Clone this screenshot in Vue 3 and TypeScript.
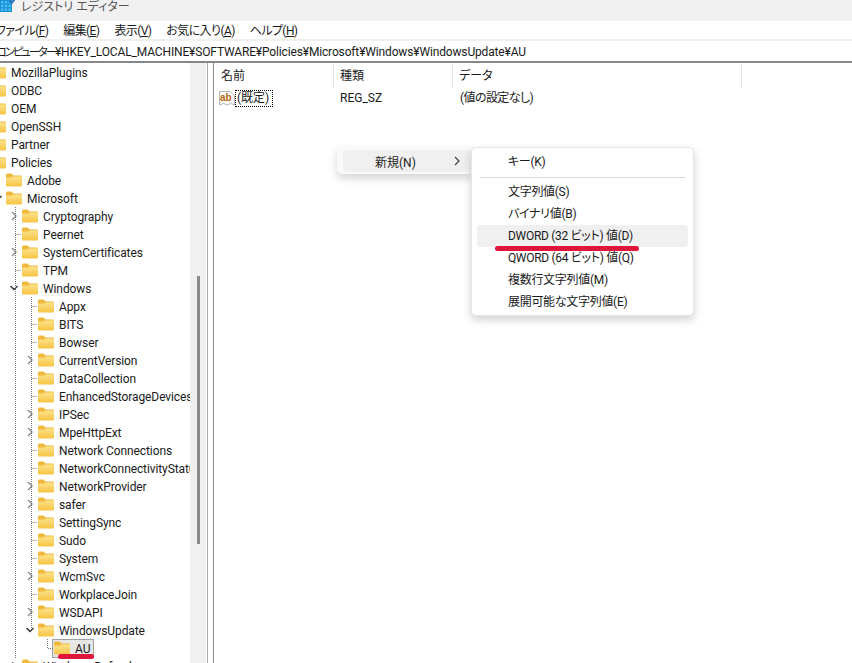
<script setup lang="ts">
// ツリーの行データ
interface TreeRow {
  label: string;
  level: number;
  arrow?: "closed" | "open";
  selected?: boolean;
}

const menus = [
  { name: "ファイル(", key: "F" },
  { name: "編集(", key: "E" },
  { name: "表示(", key: "V" },
  { name: "お気に入り(", key: "A" },
  { name: "ヘルプ(", key: "H" },
];

const rows: TreeRow[] = [
  { label: "MozillaPlugins", level: 0 },
  { label: "ODBC", level: 0 },
  { label: "OEM", level: 0 },
  { label: "OpenSSH", level: 0 },
  { label: "Partner", level: 0 },
  { label: "Policies", level: 0 },
  { label: "Adobe", level: 1 },
  { label: "Microsoft", level: 1, arrow: "open" },
  { label: "Cryptography", level: 2, arrow: "closed" },
  { label: "Peernet", level: 2 },
  { label: "SystemCertificates", level: 2, arrow: "closed" },
  { label: "TPM", level: 2 },
  { label: "Windows", level: 2, arrow: "open" },
  { label: "Appx", level: 3 },
  { label: "BITS", level: 3 },
  { label: "Bowser", level: 3 },
  { label: "CurrentVersion", level: 3, arrow: "closed" },
  { label: "DataCollection", level: 3 },
  { label: "EnhancedStorageDevices", level: 3 },
  { label: "IPSec", level: 3, arrow: "closed" },
  { label: "MpeHttpExt", level: 3, arrow: "closed" },
  { label: "Network Connections", level: 3 },
  { label: "NetworkConnectivityStatusIndicator", level: 3 },
  { label: "NetworkProvider", level: 3, arrow: "closed" },
  { label: "safer", level: 3, arrow: "closed" },
  { label: "SettingSync", level: 3 },
  { label: "Sudo", level: 3 },
  { label: "System", level: 3 },
  { label: "WcmSvc", level: 3, arrow: "closed" },
  { label: "WorkplaceJoin", level: 3 },
  { label: "WSDAPI", level: 3, arrow: "closed" },
  { label: "WindowsUpdate", level: 3, arrow: "open" },
  { label: "AU", level: 4, selected: true },
  { label: "Windows Defender", level: 2, arrow: "closed" },
];

// 階層ごとの矢印スロットの左端
const indent = [-26, -10, 6, 22, 38];

const subItems = [
  "文字列値(S)",
  "バイナリ値(B)",
  "DWORD (32 ビット) 値(D)",
  "QWORD (64 ビット) 値(Q)",
  "複数行文字列値(M)",
  "展開可能な文字列値(E)",
];
</script>

<template>
  <div class="app">
    <div class="titlebar">
      <svg class="app-icon" width="15" height="13" viewBox="0 0 15 13">
        <rect x="0" y="0" width="12" height="12" fill="#1b8fd6" />
        <rect x="1" y="1" width="2.5" height="2.5" fill="#49bdf0" />
        <rect x="4.7" y="1" width="2.5" height="2.5" fill="#49bdf0" />
        <rect x="8.4" y="1" width="2.5" height="2.5" fill="#49bdf0" />
        <rect x="1" y="4.7" width="2.5" height="2.5" fill="#49bdf0" />
        <rect x="4.7" y="4.7" width="2.5" height="2.5" fill="#49bdf0" />
        <rect x="8.4" y="4.7" width="2.5" height="2.5" fill="#49bdf0" />
        <rect x="1" y="8.4" width="2.5" height="2.5" fill="#49bdf0" />
        <rect x="4.7" y="8.4" width="2.5" height="2.5" fill="#49bdf0" />
        <rect x="8.4" y="8.4" width="2.5" height="2.5" fill="#49bdf0" />
        <path d="M9.5 1 L11.5 3 L15 -1" fill="none" stroke="#2a6fb8" stroke-width="2" />
      </svg>
      <span class="title-text">レジストリ エディター</span>
    </div>

    <div class="menubar">
      <span v-for="m in menus" :key="m.key" class="menu-item">{{ m.name }}<u>{{ m.key }}</u>)</span>
    </div>

    <div class="address"><span class="address-root">コンピューター</span>¥HKEY_LOCAL_MACHINE¥SOFTWARE¥Policies¥Microsoft¥Windows¥WindowsUpdate¥AU</div>

    <div class="main">
      <div class="tree">
        <div
          v-for="row in rows"
          :key="row.label"
          class="tree-row"
          :style="{ marginLeft: indent[row.level] + 'px' }"
        >
          <span class="arrow">
            <svg v-if="row.arrow === 'closed'" width="8" height="10" viewBox="0 0 8 10">
              <path d="M2 1 L6 5 L2 9" fill="none" stroke="#8a8a8a" stroke-width="1.4" />
            </svg>
            <svg v-else-if="row.arrow === 'open'" width="10" height="8" viewBox="0 0 10 8">
              <path d="M1.5 2 L5 5.5 L8.5 2" fill="none" stroke="#333" stroke-width="1.4" />
            </svg>
          </span>
          <span class="node" :class="{ selected: row.selected }">
            <svg class="folder" width="16" height="14" viewBox="0 0 16 14">
              <defs>
                <linearGradient id="folderBody" x1="0" y1="0" x2="0" y2="1">
                  <stop offset="0" stop-color="#fde28a" />
                  <stop offset="1" stop-color="#f7c543" />
                </linearGradient>
              </defs>
              <path d="M0 2 Q0 0.5 1.5 0.5 L5.5 0.5 L7.5 2.5 L14.5 2.5 Q16 2.5 16 3.5 L16 5 L0 5 Z" fill="#f0b93a" />
              <path d="M0 4.5 L6 4.5 L7.5 3.6 L16 3.6 L16 12.5 Q16 13.5 15 13.5 L1 13.5 Q0 13.5 0 12.5 Z" fill="url(#folderBody)" />
            </svg>
            <span class="label">{{ row.label }}</span>
          </span>
        </div>

        <!-- ツリーの点線 -->
        <svg class="guides" width="190" height="600" viewBox="0 0 190 600">
          <g fill="none" stroke="#777" stroke-width="1" stroke-dasharray="1 1">
            <path d="M15.5 144 V596" />
            <path d="M15.5 171.5 H21 M15.5 207.5 H21" />
            <path d="M31.5 234 V565" />
            <path d="M31.5 243.5 H37 M31.5 261.5 H37 M31.5 279.5 H37 M31.5 315.5 H37 M31.5 333.5 H37" />
            <path d="M31.5 387.5 H37 M31.5 405.5 H37 M31.5 459.5 H37 M31.5 477.5 H37 M31.5 495.5 H37 M31.5 531.5 H37" />
            <path d="M47.5 576 V585.5 H53" />
          </g>
        </svg>
        <span class="red-au"></span>
      </div>

      <div class="scroll-track"><span class="scroll-thumb"></span></div>
      <div class="splitter"></div>

      <div class="list">
        <div class="list-head">
          <span class="col col-name">名前</span>
          <span class="col col-type">種類</span>
          <span class="col col-data">データ</span>
        </div>
        <div class="list-row">
          <span class="cell-name">
            <svg class="ab-icon" width="16" height="16" viewBox="0 0 16 16">
              <path d="M0.5 1.5 H11 L15.5 6 V15 L11.5 13.5 L8 15 L4.5 13.5 L0.5 15 Z" fill="#fbfbfb" stroke="#b5b5b5" />
              <text x="1" y="10.5" font-size="10" font-weight="700" fill="#b8650f" font-family="Liberation Sans, sans-serif">ab</text>
            </svg>
            <span class="focus-box">(既定)</span>
          </span>
          <span class="cell-type">REG_SZ</span>
          <span class="cell-data">(値の設定なし)</span>
        </div>
      </div>
    </div>

    <!-- コンテキストメニュー -->
    <div class="ctx">
      <div class="ctx-item">
        <span>新規(N)</span>
        <svg width="8" height="10" viewBox="0 0 8 10">
          <path d="M2 1 L6 5 L2 9" fill="none" stroke="#444" stroke-width="1.2" />
        </svg>
      </div>
    </div>
    <div class="sub">
      <div class="sub-item">キー(K)</div>
      <div class="sub-sep"></div>
      <div
        v-for="(item, i) in subItems"
        :key="item"
        class="sub-item"
        :class="{ hot: i === 2 }"
      >
        {{ item }}
      </div>
    </div>
    <span class="red-dword"></span>
  </div>
</template>

<style scoped>
.app {
  position: relative;
  width: 852px;
  height: 663px;
  overflow: hidden;
  display: flex;
  flex-direction: column;
  background: #fff;
  color: #1a1a1a;
  font-family: Roboto, "Noto Sans CJK JP", sans-serif;
  font-size: 12px;
  font-feature-settings: "palt";
}

.titlebar {
  height: 21px;
  flex: none;
  background: #f1f1f1;
  display: flex;
  align-items: flex-start;
  overflow: hidden;
}

.app-icon {
  flex: none;
}

.title-text {
  margin-left: 6px;
  line-height: 14px;
  color: #555;
}

.menubar {
  height: 18px;
  flex: none;
  box-sizing: border-box;
  padding-top: 2px;
  display: flex;
  align-items: center;
  margin-left: -4px;
  gap: 15px;
  line-height: 16px;
  letter-spacing: -0.6px;
}

.address {
  height: 22px;
  flex: none;
  box-sizing: border-box;
  border-top: 2px solid #f0f0f0;
  margin-left: -4px;
  padding-top: 2px;
  line-height: 18px;
  white-space: nowrap;
  letter-spacing: -0.15px;
}

.address-root {
  font-size: 11.5px;
  letter-spacing: -2.2px;
}

.main {
  flex: 1;
  min-height: 0;
  display: flex;
  border-top: 2px solid #85888a;
}

.tree {
  position: relative;
  width: 190px;
  flex: none;
  overflow: hidden;
}

.tree-row {
  height: 18px;
  display: flex;
  align-items: center;
  white-space: nowrap;
}

.arrow {
  width: 16px;
  height: 18px;
  flex: none;
  display: flex;
  align-items: center;
  justify-content: center;
}

.node {
  display: flex;
  align-items: center;
  height: 18px;
  box-sizing: border-box;
  flex: none;
}

.folder {
  flex: none;
  margin-right: 5px;
}

.label {
  line-height: 18px;
  margin-top: 2px;
  letter-spacing: -0.1px;
}

.selected {
  height: 19px;
  margin-top: 1px;
  margin-left: -2px;
  padding: 0 3px 2px 1px;
  background: #e6e6e6;
  border: 1px solid #a0a0a0;
}

.guides {
  position: absolute;
  left: 0;
  top: 0;
  pointer-events: none;
}

.red-au {
  position: absolute;
  left: 58px;
  top: 591px;
  width: 36px;
  height: 5px;
  border-radius: 3px;
  background: #e0153a;
}

.scroll-track {
  width: 16px;
  flex: none;
  background: #f0f0f0;
  display: flex;
  justify-content: center;
  padding-top: 213px;
  box-sizing: border-box;
}

.scroll-thumb {
  display: block;
  width: 3px;
  height: 268px;
  margin-left: 1px;
  background: #8a8a8a;
}

.splitter {
  width: 5px;
  flex: none;
  margin-left: 1px;
  border-left: 1px solid #a9a9a9;
  border-right: 1px solid #85888f;
}

.list {
  flex: 1;
  min-width: 0;
}

.list-head {
  display: flex;
  height: 25px;
  padding-top: 1px;
  box-sizing: border-box;
}

.col {
  box-sizing: border-box;
  padding-left: 6px;
  line-height: 24px;
  border-right: 1px solid #e5e5e5;
}

.col-name {
  width: 120px;
  padding-left: 7px;
}

.col-type {
  width: 119px;
}

.col-data {
  width: 289px;
}

.list-row {
  display: flex;
  align-items: center;
  height: 19px;
  padding-top: 1px;
  box-sizing: border-box;
  line-height: 18px;
}

.cell-name {
  width: 121px;
  display: flex;
  align-items: center;
  padding-left: 5px;
  box-sizing: border-box;
}

.ab-icon {
  flex: none;
}

.focus-box {
  padding: 0 4px 0 2px;
  height: 17px;
  line-height: 17px;
  outline: 1px dotted #000;
  outline-offset: -1px;
}

.cell-type {
  width: 120px;
  padding-left: 6px;
  box-sizing: border-box;
  margin-left: -1px;
}

.cell-data {
  padding-left: 6px;
  letter-spacing: -0.6px;
}

.ctx {
  position: absolute;
  left: 337px;
  top: 147px;
  width: 136px;
  height: 27px;
  box-sizing: border-box;
  padding: 3px 2px 2px 6px;
  background: #f9f9f9;
  border-radius: 5px;
  box-shadow: 0 4px 10px rgba(0, 0, 0, 0.18);
}

.ctx-item {
  height: 22px;
  display: flex;
  align-items: center;
  justify-content: space-between;
  padding: 0 10px 0 32px;
  background: #f0f0f0;
  border-radius: 4px;
}

.sub {
  position: absolute;
  left: 471px;
  top: 147px;
  width: 223px;
  height: 169px;
  box-sizing: border-box;
  padding: 3px 5px;
  background: #fff;
  border: 1px solid #e6e6e6;
  border-radius: 5px;
  box-shadow: 0 4px 10px rgba(0, 0, 0, 0.18);
}

.sub-item {
  height: 22px;
  line-height: 22px;
  padding-left: 31px;
  border-radius: 4px;
  white-space: nowrap;
  letter-spacing: -0.3px;
}

.sub-item.hot {
  background: #f0f0f0;
}

.sub-sep {
  height: 1px;
  margin: 4px 3px 3px;
  background: #d9d9d9;
}

.red-dword {
  position: absolute;
  left: 495px;
  top: 246px;
  width: 144px;
  height: 5px;
  border-radius: 3px;
  background: #e0153a;
}
</style>

<style>
html,
body {
  margin: 0;
  background: #fff;
}
</style>
